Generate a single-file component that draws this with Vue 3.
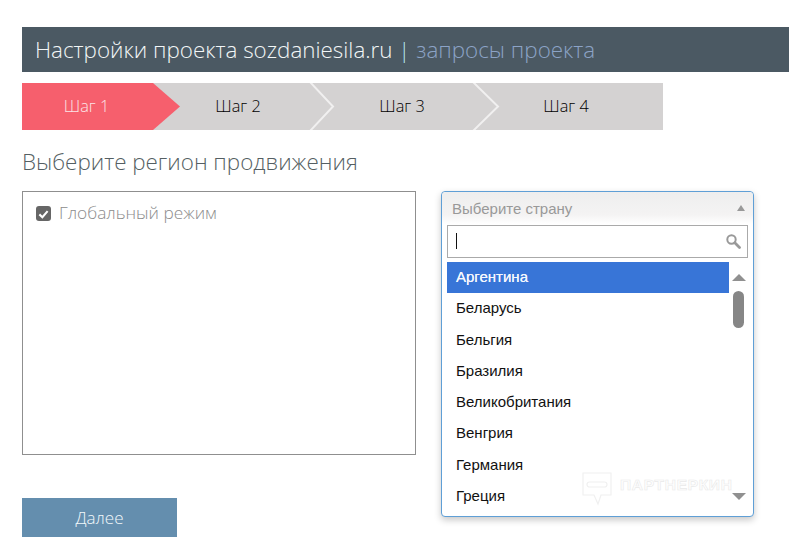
<template>
  <div class="page">
    <h1 class="title-bar">
      Настройки проекта sozdaniesila.ru <span class="divider">|</span> <span class="sub">запросы проекта</span>
    </h1>

    <!-- Steps -->
    <div class="steps">
      <svg class="arrows" width="641" height="47" viewBox="0 0 641 47">
        <polygon points="0,0 131,0 158,23.5 131,47 0,47" fill="#f65f6d" />
        <polyline points="288,-1 311,23.5 288,48" fill="none" stroke="#f1f0f0" stroke-width="2" />
        <polyline points="451,-1 476,23.5 451,48" fill="none" stroke="#f1f0f0" stroke-width="2" />
      </svg>
      <div v-for="(step, i) in steps" :key="step" class="step" :class="{ active: i === 0 }">{{ step }}</div>
    </div>

    <h2 class="section-title">Выберите регион продвижения</h2>

    <div class="columns">
      <!-- Left: regions -->
      <div class="region-box">
        <label class="global-mode">
          <span class="checkbox">
            <svg width="16" height="16" viewBox="0 0 16 16">
              <polyline points="3.6,8.4 6.8,11.4 12.4,5" fill="none" stroke="#fff" stroke-width="2.2" />
            </svg>
          </span>
          Глобальный режим
        </label>
      </div>

      <!-- Right: country dropdown, open over the page -->
      <div class="dropdown">
        <div class="dropdown-head">
          <span>Выберите страну</span>
          <i class="head-arrow"></i>
        </div>
        <div class="search">
          <span class="caret"></span>
          <svg width="16" height="16" viewBox="0 0 16 16">
            <circle cx="6.5" cy="6.5" r="4.2" fill="none" stroke="#999" stroke-width="2" />
            <line x1="9.8" y1="9.8" x2="14.5" y2="14.5" stroke="#999" stroke-width="2.8" stroke-linecap="round" />
          </svg>
        </div>
        <div class="list-wrap">
          <ul class="list">
            <li v-for="(country, i) in countries" :key="country" :class="{ selected: i === 0 }">{{ country }}</li>
          </ul>
          <div class="scrollbar">
            <i class="scroll-up"></i>
            <div class="thumb"></div>
            <i class="scroll-down"></i>
          </div>
        </div>
        <div class="watermark">
          <svg width="30" height="34" viewBox="0 0 30 34">
            <path d="M1 1H29V23H19L16 32L12 23H1Z" fill="none" stroke="#f0f0f0" stroke-width="1.2" />
            <rect x="5" y="10" width="20" height="5" rx="2.5" fill="none" stroke="#f0f0f0" stroke-width="1.2" />
          </svg>
          <span>ПАРТНЕРКИН</span>
        </div>
      </div>
    </div>

    <button class="next-btn">Далее</button>
  </div>
</template>

<script setup>
const steps = ['Шаг 1', 'Шаг 2', 'Шаг 3', 'Шаг 4']

const countries = [
  'Аргентина',
  'Беларусь',
  'Бельгия',
  'Бразилия',
  'Великобритания',
  'Венгрия',
  'Германия',
  'Греция'
]
</script>

<style>
html, body {
  background: #fff;
  overflow: hidden;
}
</style>

<style scoped>
.page {
  height: 558px;
  box-sizing: border-box;
  padding: 27px 0 0 22px;
  font-family: 'Open Sans', sans-serif;
  overflow: hidden;
}

.title-bar {
  margin: 0;
  height: 45px;
  padding-left: 13px;
  background: #4b5963;
  color: #f2f6f7;
  font-size: 22.4px;
  font-weight: 300;
  line-height: 46px;
  white-space: nowrap;
}
.divider { color: #b5e2ea; }
.sub { color: #8ca3c6; }

/* Steps */
.steps {
  position: relative;
  display: flex;
  width: 641px;
  height: 47px;
  margin-top: 11px;
  background: #d4d2d2;
}
.arrows {
  position: absolute;
  top: 0;
  left: 0;
}
.step {
  position: relative;
  width: 164px;
  text-align: center;
  font-size: 16.3px;
  font-weight: 300;
  line-height: 47px;
  color: #000;
}
.step.active {
  width: 134px;
  padding-right: 5px;
  box-sizing: border-box;
  color: #fbe4e6;
}

.section-title {
  margin: 18px 0 0;
  font-size: 22.4px;
  font-weight: 300;
  line-height: 28px;
  color: #555f63;
}

.columns {
  position: relative;
  margin-top: 15px;
}

/* Region box */
.region-box {
  width: 394px;
  height: 264px;
  box-sizing: border-box;
  border: 1px solid #8f8f8f;
  padding: 10px 13px;
}
.global-mode {
  display: flex;
  align-items: center;
  gap: 8px;
  font-size: 17.3px;
  font-weight: 300;
  line-height: 22px;
  color: #8c8c8c;
}
.checkbox {
  width: 15px;
  height: 15px;
  margin-top: 1px;
  border-radius: 3px;
  background: #666;
  display: flex;
  align-items: center;
  justify-content: center;
}

/* Dropdown */
.dropdown {
  position: absolute;
  top: 0;
  left: 419px;
  width: 313px;
  height: 326px;
  box-sizing: border-box;
  border: 1px solid #5f9fd6;
  border-radius: 4px;
  background: #fff;
  box-shadow: 0 3px 7px rgba(0, 0, 0, 0.22);
  font-family: 'Liberation Sans', sans-serif;
}
.dropdown-head {
  display: flex;
  align-items: center;
  justify-content: space-between;
  height: 32px;
  margin-bottom: 1px;
  padding: 0 8px 0 10px;
  border-radius: 4px 4px 0 0;
  background: linear-gradient(#eeeeee, #f4f3f3 70%, #ffffff);
  color: #999;
  font-size: 15px;
}
.head-arrow {
  width: 0;
  height: 0;
  border-left: 4px solid transparent;
  border-right: 4px solid transparent;
  border-bottom: 6px solid #999;
}
.search {
  display: flex;
  align-items: center;
  justify-content: space-between;
  height: 33px;
  margin: 0 5px;
  padding: 0 6px 2px 8px;
  border: 1px solid #aaa;
  box-sizing: border-box;
}
.caret {
  width: 1px;
  height: 16px;
  background: #111;
}

.list-wrap {
  display: flex;
  margin: 4px 0 0 5px;
}
.list {
  width: 282px;
  margin: 0;
  padding: 0;
  list-style: none;
  font-size: 15px;
  color: #111;
}
.list li {
  height: 31.3px;
  padding-left: 9px;
  line-height: 29px;
}
.list li.selected {
  line-height: 30px;
  background: #3875d7;
  color: #f4f7fd;
  text-shadow: 0 0 0.6px #f4f7fd;
}

.scrollbar {
  display: flex;
  flex-direction: column;
  align-items: center;
  width: 19px;
  height: 250px;
  padding-top: 12px;
  box-sizing: border-box;
}
.scroll-up {
  width: 0;
  height: 0;
  border-left: 7px solid transparent;
  border-right: 7px solid transparent;
  border-bottom: 7px solid #909090;
}
.thumb {
  width: 11px;
  height: 37px;
  margin-top: 10px;
  border-radius: 6px;
  background: #868686;
}
.scroll-down {
  width: 0;
  height: 0;
  margin-top: auto;
  margin-bottom: 12px;
  border-left: 7px solid transparent;
  border-right: 7px solid transparent;
  border-top: 7px solid #909090;
}

/* Faint stamp over the list */
.watermark {
  position: absolute;
  left: 140px;
  top: 280px;
  display: flex;
  align-items: flex-start;
  gap: 8px;
  color: transparent;
  -webkit-text-stroke: 0.6px #e9e9e9;
  font-size: 15.5px;
  font-weight: 700;
  letter-spacing: 0.7px;
  line-height: 26px;
  pointer-events: none;
}

.next-btn {
  display: block;
  width: 155px;
  height: 39px;
  margin-top: 43px;
  border: none;
  background: #648eae;
  color: #f2f8fb;
  font-family: 'Open Sans', sans-serif;
  font-size: 17px;
  font-weight: 300;
}
</style>
